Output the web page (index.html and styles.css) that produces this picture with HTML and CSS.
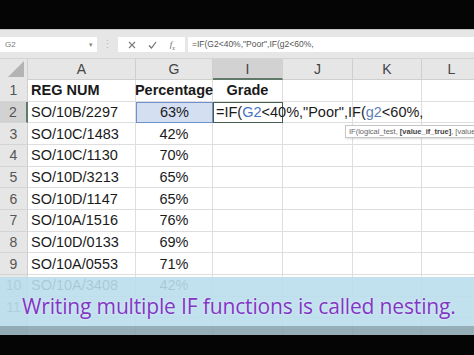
FILE: index.html
```html
<!DOCTYPE html>
<html lang="en">
<head>
  <meta charset="UTF-8" />
  <meta name="viewport" content="width=device-width, initial-scale=1.0" />
  <title>Nested IF functions</title>
  <link rel="stylesheet" href="styles.css">
</head>
<body>
  <div class="screen">
    <div class="topbar"></div>

    <div class="formula-bar">
      <div class="name-box"><span>G2</span><span class="caret">&#9662;</span></div>
      <div class="grip">&#8942;</div>
      <div class="fx-box">
        <svg width="8" height="8" viewBox="0 0 8 8"><path d="M1 1 L7 7 M7 1 L1 7" stroke="#7a7a7a" stroke-width="1.1" fill="none"/></svg>
        <svg width="9" height="8" viewBox="0 0 9 8"><path d="M1 4.5 L3.5 7 L8 1" stroke="#6f6f6f" stroke-width="1.2" fill="none"/></svg>
        <span class="fx">f<sub>x</sub></span>
      </div>
      <div class="formula-input">=IF(G2&lt;40%,"Poor",IF(g2&lt;60%,</div>
    </div>

    <div class="sheet">
      <div class="row head-row">
        <div class="corner"><svg width="16" height="16" viewBox="0 0 16 16"><path d="M16 0 L16 16 L0 16 Z" fill="#b4b4b4"/></svg></div>
        <div class="col-head">A</div>
        <div class="col-head">G</div>
        <div class="col-head selected">I</div>
        <div class="col-head">J</div>
        <div class="col-head">K</div>
        <div class="col-head">L</div>
      </div>

      <div class="row">
        <div class="row-head">1</div>
        <div class="cell bold">REG NUM</div>
        <div class="cell bold center">Percentage</div>
        <div class="cell bold center">Grade</div>
        <div class="cell"></div><div class="cell"></div><div class="cell"></div>
      </div>
      <div class="row">
        <div class="row-head selected">2</div>
        <div class="cell">SO/10B/2297</div>
        <div class="cell center ref">63%</div>
        <div class="cell active"><span class="formula">=IF(<span class="ref-a">G2</span>&lt;40%,"Poor",IF(<span class="ref-b">g2</span>&lt;60%,</span></div>
        <div class="cell"></div><div class="cell"></div><div class="cell"></div>
      </div>
      <div class="row">
        <div class="row-head">3</div>
        <div class="cell">SO/10C/1483</div>
        <div class="cell center">42%</div>
        <div class="cell"></div><div class="cell"></div><div class="cell"></div><div class="cell"></div>
      </div>
      <div class="row">
        <div class="row-head">4</div>
        <div class="cell">SO/10C/1130</div>
        <div class="cell center">70%</div>
        <div class="cell"></div><div class="cell"></div><div class="cell"></div><div class="cell"></div>
      </div>
      <div class="row">
        <div class="row-head">5</div>
        <div class="cell">SO/10D/3213</div>
        <div class="cell center">65%</div>
        <div class="cell"></div><div class="cell"></div><div class="cell"></div><div class="cell"></div>
      </div>
      <div class="row">
        <div class="row-head">6</div>
        <div class="cell">SO/10D/1147</div>
        <div class="cell center">65%</div>
        <div class="cell"></div><div class="cell"></div><div class="cell"></div><div class="cell"></div>
      </div>
      <div class="row">
        <div class="row-head">7</div>
        <div class="cell">SO/10A/1516</div>
        <div class="cell center">76%</div>
        <div class="cell"></div><div class="cell"></div><div class="cell"></div><div class="cell"></div>
      </div>
      <div class="row">
        <div class="row-head">8</div>
        <div class="cell">SO/10D/0133</div>
        <div class="cell center">69%</div>
        <div class="cell"></div><div class="cell"></div><div class="cell"></div><div class="cell"></div>
      </div>
      <div class="row">
        <div class="row-head">9</div>
        <div class="cell">SO/10A/0553</div>
        <div class="cell center">71%</div>
        <div class="cell"></div><div class="cell"></div><div class="cell"></div><div class="cell"></div>
      </div>
      <div class="row">
        <div class="row-head">10</div>
        <div class="cell">SO/10A/3408</div>
        <div class="cell center">42%</div>
        <div class="cell"></div><div class="cell"></div><div class="cell"></div><div class="cell"></div>
      </div>
      <div class="row">
        <div class="row-head">11</div>
        <div class="cell"></div><div class="cell"></div><div class="cell"></div><div class="cell"></div><div class="cell"></div><div class="cell"></div>
      </div>
      <div class="row">
        <div class="row-head"></div>
        <div class="cell"></div><div class="cell"></div><div class="cell"></div><div class="cell"></div><div class="cell"></div><div class="cell"></div>
      </div>
    </div>

    <div class="tooltip">IF(logical_test, <b>[value_if_true]</b>, [value_if_false])</div>

    <div class="caption">
      <p>Writing multiple IF functions is called nesting.</p>
    </div>
    <div class="caption-edge"></div>
    <div class="bottombar"></div>
  </div>
</body>
</html>
```

FILE: styles.css
```css
* { margin: 0; padding: 0; box-sizing: border-box; }
body {
  background: #000;
  font-family: "Liberation Sans", Arial, sans-serif;
}
.screen {
  position: relative;
  width: 474px;
  height: 355px;
  overflow: hidden;
  background: #fff;
}
.topbar {
  height: 29px;
  background: #050505;
}

/* formula bar */
.formula-bar {
  height: 29px;
  background: #e6e6e6;
  border-top: 1px solid #c8c8c8;
  display: flex;
  align-items: center;
  padding-top: 1px;
}
.name-box {
  width: 97px;
  height: 15px;
  background: #fff;
  display: flex;
  align-items: center;
  justify-content: space-between;
  padding: 0 4px 0 5px;
  font-size: 8px;
  color: #777;
}
.name-box .caret { font-size: 7px; color: #888; }
.grip {
  width: 21px;
  text-align: center;
  color: #bbb;
  font-size: 11px;
}
.fx-box {
  width: 67px;
  height: 15px;
  background: #fff;
  display: flex;
  align-items: center;
  justify-content: space-around;
  padding: 0 4px;
}
.fx {
  font-family: "Liberation Serif", serif;
  font-style: italic;
  font-size: 9px;
  color: #666;
}
.fx sub { font-size: 6px; }
.formula-input {
  flex: 1;
  height: 15px;
  margin-left: 3px;
  background: #fff;
  padding-left: 4px;
  font-size: 8.5px;
  line-height: 15px;
  color: #555;
  white-space: nowrap;
}

/* sheet grid */
.sheet { background: #fff; }
.row {
  display: grid;
  grid-template-columns: 28px 108px 77px 70px 70px 69px 60px;
  height: 21.67px;
}
.head-row {
  height: 22px;
  background: #e6e6e6;
  border-top: 1px solid #d4d4d4;
}
.corner {
  display: flex;
  align-items: flex-end;
  justify-content: flex-end;
  padding: 0 3px 3px 0;
  border-right: 1px solid #d0d0d0;
}
.col-head {
  display: flex;
  align-items: center;
  justify-content: center;
  font-size: 14px;
  color: #444;
  border-right: 1px solid #cfcfcf;
  border-bottom: 1px solid #cfcfcf;
}
.col-head.selected {
  background: #d2d2d2;
  border-bottom: 2px solid #5f7a68;
}
.row-head {
  background: #e6e6e6;
  display: flex;
  align-items: center;
  justify-content: center;
  font-size: 14px;
  color: #555;
  border-bottom: 1px solid #d4d4d4;
  border-right: 1px solid #cfcfcf;
}
.row-head.selected {
  background: #d2d2d2;
  border-right: 2px solid #5f7a68;
}
.cell {
  display: flex;
  align-items: center;
  padding: 0 3px;
  font-size: 14.5px;
  color: #1a1a1a;
  white-space: nowrap;
  border-right: 1px solid #dedede;
  border-bottom: 1px solid #dedede;
}
.cell.center { justify-content: center; }
.cell.bold { font-weight: bold; }
.cell.ref {
  background: #d4dff2;
  border: 1px solid #6f8fcf;
}
.cell.active {
  position: relative;
  border: 1px solid #45604f;
  overflow: visible;
  padding-left: 2px;
}
.formula {
  position: relative;
  z-index: 2;
  white-space: nowrap;
}
.ref-a { color: #4673c4; }
.ref-b { color: #5d7fb8; }

/* function tooltip */
.tooltip {
  position: absolute;
  left: 345px;
  top: 125px;
  width: 140px;
  height: 13px;
  background: #fff;
  border: 1px solid #c6c6c6;
  box-shadow: 1px 1px 2px rgba(0, 0, 0, 0.15);
  padding-left: 3px;
  font-size: 7.5px;
  line-height: 11px;
  color: #666;
  white-space: nowrap;
}
.tooltip b { color: #444; }

/* video caption */
.caption {
  position: absolute;
  left: 0;
  top: 277px;
  width: 100%;
  height: 49px;
  background: rgba(186, 221, 237, 0.89);
  display: flex;
  align-items: center;
  padding: 8px 0 0 22px;
}
.caption p {
  font-family: "Open Sans", "Noto Sans", sans-serif;
  font-size: 21px;
  letter-spacing: -0.15px;
  color: #8236c4;
  white-space: nowrap;
  text-shadow: 0 0 2px rgba(255, 255, 255, 0.7);
}
.caption-edge {
  position: absolute;
  left: 0;
  top: 326px;
  width: 100%;
  height: 9px;
  background: rgba(130, 160, 170, 0.85);
}
.bottombar {
  position: absolute;
  left: 0;
  bottom: 0;
  width: 100%;
  height: 20px;
  background: #050505;
}
```
